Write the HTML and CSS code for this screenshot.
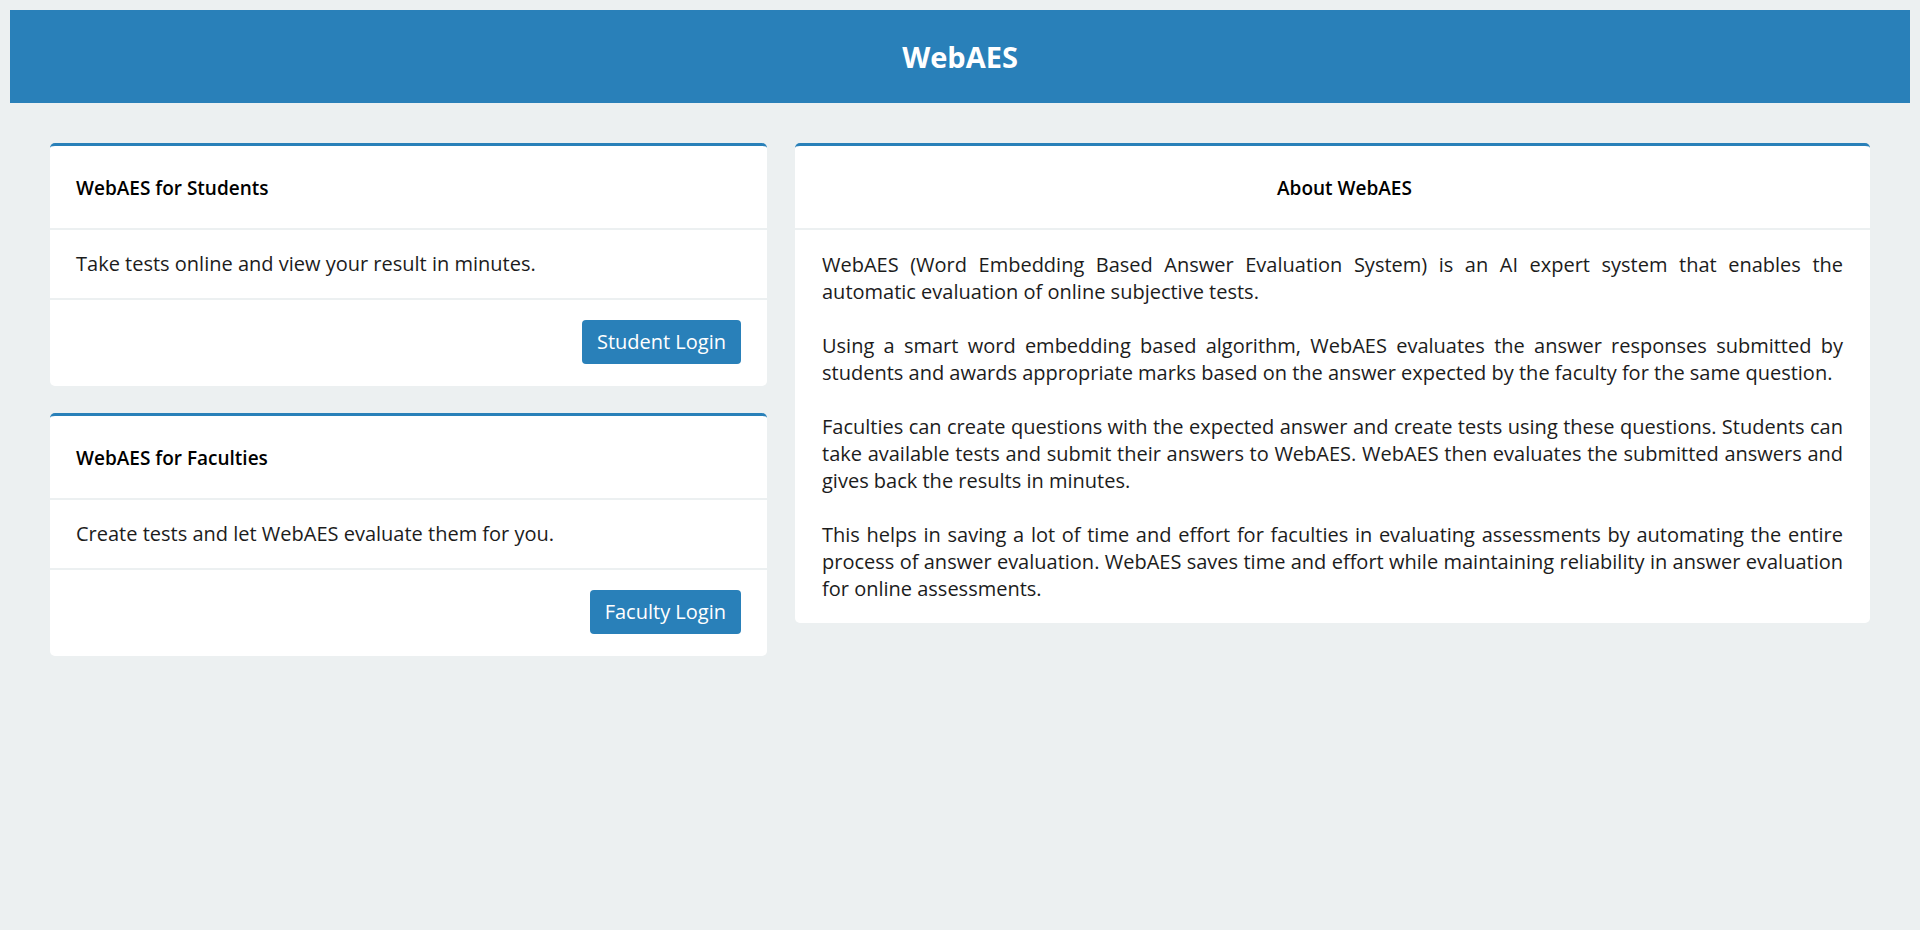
FILE: index.html
```html
<!DOCTYPE html>
<html lang="en">
<head>
<meta charset="utf-8">
<title>WebAES</title>
<link rel="stylesheet" href="styles.css">
</head>
<body>
<header class="topbar"><h1 class="brand">WebAES</h1></header>
<main class="content">
  <div class="left-col">
    <section class="card">
      <div class="card-header">WebAES for Students</div>
      <div class="card-body">Take tests online and view your result in minutes.</div>
      <div class="card-footer"><a class="btn" href="#">Student Login</a></div>
    </section>
    <section class="card">
      <div class="card-header">WebAES for Faculties</div>
      <div class="card-body">Create tests and let WebAES evaluate them for you.</div>
      <div class="card-footer"><a class="btn" href="#">Faculty Login</a></div>
    </section>
  </div>
  <div class="right-col">
    <section class="card">
      <div class="card-header center">About WebAES</div>
      <div class="card-body about">
        <p>WebAES (Word Embedding Based Answer Evaluation System) is an AI expert system that enables the automatic evaluation of online subjective tests.</p>
        <p>Using a smart word embedding based algorithm, WebAES evaluates the answer responses submitted by students and awards appropriate marks based on the answer expected by the faculty for the same question.</p>
        <p>Faculties can create questions with the expected answer and create tests using these questions. Students can take available tests and submit their answers to WebAES. WebAES then evaluates the submitted answers and gives back the results in minutes.</p>
        <p>This helps in saving a lot of time and effort for faculties in evaluating assessments by automating the entire process of answer evaluation. WebAES saves time and effort while maintaining reliability in answer evaluation for online assessments.</p>
      </div>
    </section>
  </div>
</main>
</body>
</html>
```
FILE: styles.css
```css
* { box-sizing: border-box; }
html, body { height: 100%; }
body {
  margin: 0;
  padding: 10px;
  background: #ecf0f1;
  font-family: "Open Sans", "Noto Sans", "DejaVu Sans", sans-serif;
  font-size: 20px;
  line-height: 27px;
  color: #1c1c1c;
}
.topbar {
  background: #2980b9;
  height: 93px;
  display: flex;
  align-items: center;
  justify-content: center;
}
.brand {
  margin: 0;
  color: #fff;
  font-size: 29px;
  font-weight: 700;
  line-height: 40px;
}
.content {
  display: grid;
  grid-template-columns: 717fr 1075fr;
  gap: 28px;
  padding: 40px 40px 0;
  align-items: start;
}
.left-col { display: flex; flex-direction: column; gap: 27px; }
.card {
  background: #fff;
  border-top: 3px solid #2980b9;
  border-radius: 5px;
}
.card-header {
  padding: 29px 26px 26px;
  font-size: 19px;
  font-weight: 600;
  color: #000;
  border-bottom: 2px solid #ecf0f1;
}
.card-header.center {
  text-align: center;
  padding-left: 50px;
}
.card-body {
  padding: 20px 26px 21px;
  border-bottom: 2px solid #ecf0f1;
}
.card-body.about {
  border-bottom: 0;
  padding: 21px 27px 21px;
  text-align: justify;
}
.about p { margin: 0 0 27px; }
.about p:last-child { margin-bottom: 0; }
.card-footer {
  padding: 20px 26px 22px;
  display: flex;
  justify-content: flex-end;
}
.btn {
  display: inline-block;
  background: #2980b9;
  color: #fff;
  text-decoration: none;
  padding: 8px 15px 9px;
  border-radius: 4px;
  line-height: 27px;
}
```
